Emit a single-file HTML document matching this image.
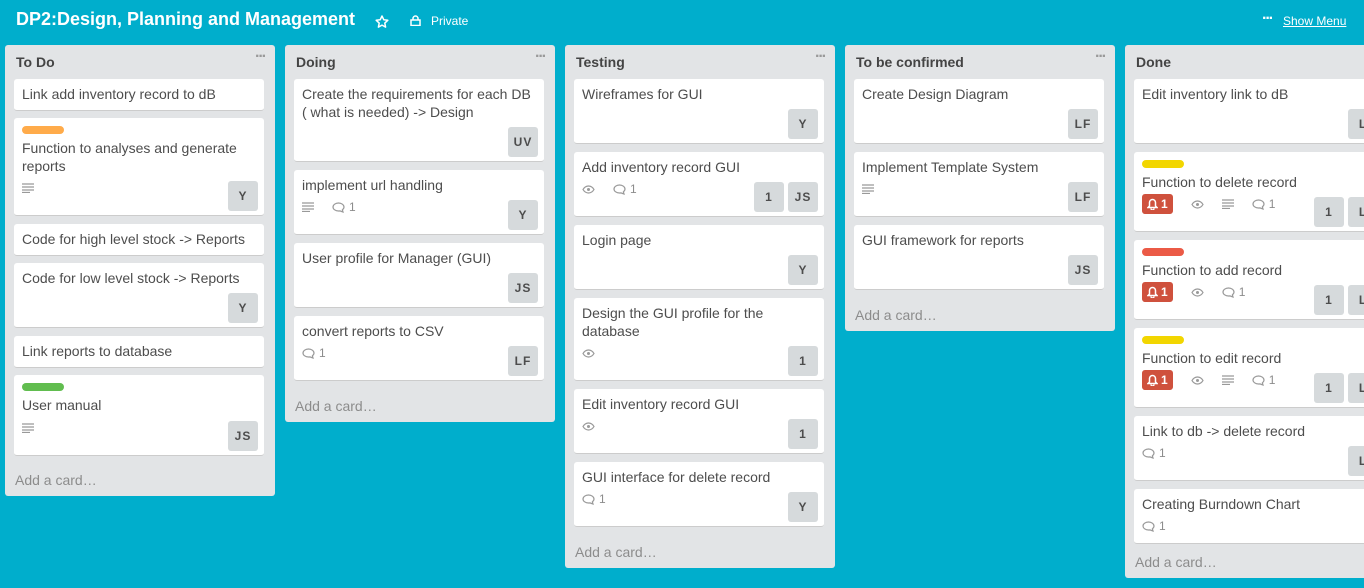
<!DOCTYPE html>
<html><head><meta charset="utf-8"><style>
*{box-sizing:border-box;margin:0;padding:0}
body{width:1364px;height:588px;overflow:hidden;background:#00aecc;font-family:"Liberation Sans",Arial,sans-serif;position:relative;color:#4d4d4d}
.title{position:absolute;left:16px;top:9px;font-size:18px;font-weight:bold;color:#fff;letter-spacing:0px}
.hdr{position:absolute;color:#fff;font-size:12px}
.list{position:absolute;top:45px;width:270px;background:#e2e4e6;border-radius:3px}
.lt{position:absolute;left:11px;top:9px;font-size:14px;font-weight:bold;color:#444}
.dots{position:absolute;right:10px;top:3px;color:#999;font-size:16px;font-weight:bold;letter-spacing:-2px}
.add{position:absolute;left:10px;font-size:14px;color:#8c8c8c}
.c{position:absolute;width:250px;background:#fff;border-radius:3px;border-bottom:1px solid #ccc}
.t{position:absolute;left:8px;top:6px;right:8px;font-size:14px;line-height:18px;color:#4d4d4d}
.lb{position:absolute;left:8px;top:8px;width:42px;height:8px;border-radius:4px}
.av{position:absolute;right:6px;bottom:4px;width:30px;height:30px;border-radius:3px;background:#d6dadc;font-size:12px;font-weight:bold;color:#4d4d4d;text-align:center;line-height:30px;letter-spacing:1px}
.av2{right:40px}
.bd{position:absolute;left:8px;height:18px;display:flex;align-items:center;font-size:12px;color:#8c8c8c;gap:4px}
.bd svg{display:block}
.bd .s{width:10px}
.bell{background:#cf513d;color:#fff;border-radius:3px;height:20px;padding:0 5px;display:flex;align-items:center;gap:3px;font-weight:bold}
</style></head><body>
<div class="title">DP2:Design, Planning and Management</div>
<svg class="hdr" style="left:375px;top:15px" width="14" height="13" viewBox="0 0 14 13"><path d="M7 1l1.8 3.8 4 .5-3 2.8.8 4L7 10.1 3.4 12.1l.8-4-3-2.8 4-.5z" fill="none" stroke="#fff" stroke-width="1.5" stroke-linejoin="round"/></svg>
<svg class="hdr" style="left:410px;top:15px" width="11" height="11" viewBox="0 0 11 11"><path d="M3 5V3.5a2.5 2.5 0 0 1 5 0V5" fill="none" stroke="#fff" stroke-width="1.5"/><rect x="1" y="5" width="9" height="5.5" fill="none" stroke="#fff" stroke-width="1.5"/></svg>
<div class="hdr" style="left:431px;top:14px">Private</div>
<div class="hdr" style="left:1262px;top:10px;font-size:16px;font-weight:bold;letter-spacing:-2px">···</div>
<div class="hdr" style="left:1283px;top:14px;text-decoration:underline">Show Menu</div>

<!-- To Do -->
<div class="list" style="left:5px;height:451px"><div class="lt">To Do</div><div class="dots">···</div><div class="add" style="top:427px">Add a card…</div></div>
<div class="c" style="left:14px;top:79px;height:32px"><div class="t">Link add inventory record to dB</div></div>
<div class="c" style="left:14px;top:118px;height:98px"><div class="lb" style="background:#ffab4a"></div><div class="t" style="top:21px">Function to analyses and generate reports</div><div class="bd" style="top:61px"><svg width="12" height="10"><path d="M0 1h12M0 4h12M0 7h12M0 9.5h8" stroke="#999" stroke-width="1.2"/></svg></div><div class="av">Y</div></div>
<div class="c" style="left:14px;top:224px;height:32px"><div class="t">Code for high level stock -&gt; Reports</div></div>
<div class="c" style="left:14px;top:263px;height:65px"><div class="t">Code for low level stock -&gt; Reports</div><div class="av">Y</div></div>
<div class="c" style="left:14px;top:336px;height:32px"><div class="t">Link reports to database</div></div>
<div class="c" style="left:14px;top:375px;height:81px"><div class="lb" style="background:#61bd4f"></div><div class="t" style="top:21px">User manual</div><div class="bd" style="top:44px"><svg width="12" height="10"><path d="M0 1h12M0 4h12M0 7h12M0 9.5h8" stroke="#999" stroke-width="1.2"/></svg></div><div class="av">JS</div></div>

<!-- Doing -->
<div class="list" style="left:285px;height:377px"><div class="lt">Doing</div><div class="dots">···</div><div class="add" style="top:353px">Add a card…</div></div>
<div class="c" style="left:294px;top:79px;height:83px"><div class="t">Create the requirements for each DB ( what is needed) -&gt; Design</div><div class="av">UV</div></div>
<div class="c" style="left:294px;top:170px;height:65px"><div class="t">implement url handling</div><div class="bd" style="top:28px"><svg width="12" height="10"><path d="M0 1h12M0 4h12M0 7h12M0 9.5h8" stroke="#999" stroke-width="1.2"/></svg><span class="s"></span><svg width="13" height="11"><path d="M6.5 1C3.5 1 1 2.8 1 5s2.5 4 5.5 4c.5 0 1 0 1.5-.1L11 10l-.6-2.2C11.4 7 12 6 12 5c0-2.2-2.5-4-5.5-4z" fill="none" stroke="#999" stroke-width="1.2"/></svg>1</div><div class="av">Y</div></div>
<div class="c" style="left:294px;top:243px;height:65px"><div class="t">User profile for Manager (GUI)</div><div class="av">JS</div></div>
<div class="c" style="left:294px;top:316px;height:65px"><div class="t">convert reports to CSV</div><div class="bd" style="top:28px"><svg width="13" height="11"><path d="M6.5 1C3.5 1 1 2.8 1 5s2.5 4 5.5 4c.5 0 1 0 1.5-.1L11 10l-.6-2.2C11.4 7 12 6 12 5c0-2.2-2.5-4-5.5-4z" fill="none" stroke="#999" stroke-width="1.2"/></svg>1</div><div class="av">LF</div></div>

<!-- Testing -->
<div class="list" style="left:565px;height:523px"><div class="lt">Testing</div><div class="dots">···</div><div class="add" style="top:499px">Add a card…</div></div>
<div class="c" style="left:574px;top:79px;height:65px"><div class="t">Wireframes for GUI</div><div class="av">Y</div></div>
<div class="c" style="left:574px;top:152px;height:65px"><div class="t">Add inventory record GUI</div><div class="bd" style="top:28px"><svg width="13" height="9"><path d="M1 4.5C2.5 2 4.5 1 6.5 1s4 1 5.5 3.5C10.5 7 8.5 8 6.5 8S2.5 7 1 4.5z" fill="none" stroke="#999" stroke-width="1.2"/><circle cx="6.5" cy="4.5" r="1.5" fill="#999"/></svg><span class="s"></span><svg width="13" height="11"><path d="M6.5 1C3.5 1 1 2.8 1 5s2.5 4 5.5 4c.5 0 1 0 1.5-.1L11 10l-.6-2.2C11.4 7 12 6 12 5c0-2.2-2.5-4-5.5-4z" fill="none" stroke="#999" stroke-width="1.2"/></svg>1</div><div class="av av2">1</div><div class="av">JS</div></div>
<div class="c" style="left:574px;top:225px;height:65px"><div class="t">Login page</div><div class="av">Y</div></div>
<div class="c" style="left:574px;top:298px;height:83px"><div class="t">Design the GUI profile for the database</div><div class="bd" style="top:46px"><svg width="13" height="9"><path d="M1 4.5C2.5 2 4.5 1 6.5 1s4 1 5.5 3.5C10.5 7 8.5 8 6.5 8S2.5 7 1 4.5z" fill="none" stroke="#999" stroke-width="1.2"/><circle cx="6.5" cy="4.5" r="1.5" fill="#999"/></svg></div><div class="av">1</div></div>
<div class="c" style="left:574px;top:389px;height:65px"><div class="t">Edit inventory record GUI</div><div class="bd" style="top:28px"><svg width="13" height="9"><path d="M1 4.5C2.5 2 4.5 1 6.5 1s4 1 5.5 3.5C10.5 7 8.5 8 6.5 8S2.5 7 1 4.5z" fill="none" stroke="#999" stroke-width="1.2"/><circle cx="6.5" cy="4.5" r="1.5" fill="#999"/></svg></div><div class="av">1</div></div>
<div class="c" style="left:574px;top:462px;height:65px"><div class="t">GUI interface for delete record</div><div class="bd" style="top:28px"><svg width="13" height="11"><path d="M6.5 1C3.5 1 1 2.8 1 5s2.5 4 5.5 4c.5 0 1 0 1.5-.1L11 10l-.6-2.2C11.4 7 12 6 12 5c0-2.2-2.5-4-5.5-4z" fill="none" stroke="#999" stroke-width="1.2"/></svg>1</div><div class="av">Y</div></div>

<!-- To be confirmed -->
<div class="list" style="left:845px;height:286px"><div class="lt">To be confirmed</div><div class="dots">···</div><div class="add" style="top:262px">Add a card…</div></div>
<div class="c" style="left:854px;top:79px;height:65px"><div class="t">Create Design Diagram</div><div class="av">LF</div></div>
<div class="c" style="left:854px;top:152px;height:65px"><div class="t">Implement Template System</div><div class="bd" style="top:28px"><svg width="12" height="10"><path d="M0 1h12M0 4h12M0 7h12M0 9.5h8" stroke="#999" stroke-width="1.2"/></svg></div><div class="av">LF</div></div>
<div class="c" style="left:854px;top:225px;height:65px"><div class="t">GUI framework for reports</div><div class="av">JS</div></div>

<!-- Done -->
<div class="list" style="left:1125px;height:533px"><div class="lt">Done</div><div class="add" style="top:509px">Add a card…</div></div>
<div class="c" style="left:1134px;top:79px;height:65px"><div class="t">Edit inventory link to dB</div><div class="av">L</div></div>
<div class="c" style="left:1134px;top:152px;height:80px"><div class="lb" style="background:#f2d600"></div><div class="t" style="top:21px">Function to delete record</div><div class="bd" style="top:43px"><span class="bell"><svg width="11" height="12"><path d="M5.5 1.5a3 3 0 0 1 3 3V8l1.5 1.5H1L2.5 8V4.5a3 3 0 0 1 3-3zM4 10.5a1.5 1.5 0 0 0 3 0" fill="none" stroke="#fff" stroke-width="1.5"/></svg>1</span><span class="s"></span><svg width="13" height="9"><path d="M1 4.5C2.5 2 4.5 1 6.5 1s4 1 5.5 3.5C10.5 7 8.5 8 6.5 8S2.5 7 1 4.5z" fill="none" stroke="#999" stroke-width="1.2"/><circle cx="6.5" cy="4.5" r="1.5" fill="#999"/></svg><span class="s"></span><svg width="12" height="10"><path d="M0 1h12M0 4h12M0 7h12M0 9.5h8" stroke="#999" stroke-width="1.2"/></svg><span class="s"></span><svg width="13" height="11"><path d="M6.5 1C3.5 1 1 2.8 1 5s2.5 4 5.5 4c.5 0 1 0 1.5-.1L11 10l-.6-2.2C11.4 7 12 6 12 5c0-2.2-2.5-4-5.5-4z" fill="none" stroke="#999" stroke-width="1.2"/></svg>1</div><div class="av av2">1</div><div class="av">L</div></div>
<div class="c" style="left:1134px;top:240px;height:80px"><div class="lb" style="background:#eb5a46"></div><div class="t" style="top:21px">Function to add record</div><div class="bd" style="top:43px"><span class="bell"><svg width="11" height="12"><path d="M5.5 1.5a3 3 0 0 1 3 3V8l1.5 1.5H1L2.5 8V4.5a3 3 0 0 1 3-3zM4 10.5a1.5 1.5 0 0 0 3 0" fill="none" stroke="#fff" stroke-width="1.5"/></svg>1</span><span class="s"></span><svg width="13" height="9"><path d="M1 4.5C2.5 2 4.5 1 6.5 1s4 1 5.5 3.5C10.5 7 8.5 8 6.5 8S2.5 7 1 4.5z" fill="none" stroke="#999" stroke-width="1.2"/><circle cx="6.5" cy="4.5" r="1.5" fill="#999"/></svg><span class="s"></span><svg width="13" height="11"><path d="M6.5 1C3.5 1 1 2.8 1 5s2.5 4 5.5 4c.5 0 1 0 1.5-.1L11 10l-.6-2.2C11.4 7 12 6 12 5c0-2.2-2.5-4-5.5-4z" fill="none" stroke="#999" stroke-width="1.2"/></svg>1</div><div class="av av2">1</div><div class="av">L</div></div>
<div class="c" style="left:1134px;top:328px;height:80px"><div class="lb" style="background:#f2d600"></div><div class="t" style="top:21px">Function to edit record</div><div class="bd" style="top:43px"><span class="bell"><svg width="11" height="12"><path d="M5.5 1.5a3 3 0 0 1 3 3V8l1.5 1.5H1L2.5 8V4.5a3 3 0 0 1 3-3zM4 10.5a1.5 1.5 0 0 0 3 0" fill="none" stroke="#fff" stroke-width="1.5"/></svg>1</span><span class="s"></span><svg width="13" height="9"><path d="M1 4.5C2.5 2 4.5 1 6.5 1s4 1 5.5 3.5C10.5 7 8.5 8 6.5 8S2.5 7 1 4.5z" fill="none" stroke="#999" stroke-width="1.2"/><circle cx="6.5" cy="4.5" r="1.5" fill="#999"/></svg><span class="s"></span><svg width="12" height="10"><path d="M0 1h12M0 4h12M0 7h12M0 9.5h8" stroke="#999" stroke-width="1.2"/></svg><span class="s"></span><svg width="13" height="11"><path d="M6.5 1C3.5 1 1 2.8 1 5s2.5 4 5.5 4c.5 0 1 0 1.5-.1L11 10l-.6-2.2C11.4 7 12 6 12 5c0-2.2-2.5-4-5.5-4z" fill="none" stroke="#999" stroke-width="1.2"/></svg>1</div><div class="av av2">1</div><div class="av">L</div></div>
<div class="c" style="left:1134px;top:416px;height:65px"><div class="t">Link to db -&gt; delete record</div><div class="bd" style="top:28px"><svg width="13" height="11"><path d="M6.5 1C3.5 1 1 2.8 1 5s2.5 4 5.5 4c.5 0 1 0 1.5-.1L11 10l-.6-2.2C11.4 7 12 6 12 5c0-2.2-2.5-4-5.5-4z" fill="none" stroke="#999" stroke-width="1.2"/></svg>1</div><div class="av">L</div></div>
<div class="c" style="left:1134px;top:489px;height:55px"><div class="t">Creating Burndown Chart</div><div class="bd" style="top:28px"><svg width="13" height="11"><path d="M6.5 1C3.5 1 1 2.8 1 5s2.5 4 5.5 4c.5 0 1 0 1.5-.1L11 10l-.6-2.2C11.4 7 12 6 12 5c0-2.2-2.5-4-5.5-4z" fill="none" stroke="#999" stroke-width="1.2"/></svg>1</div></div>
</body></html>
